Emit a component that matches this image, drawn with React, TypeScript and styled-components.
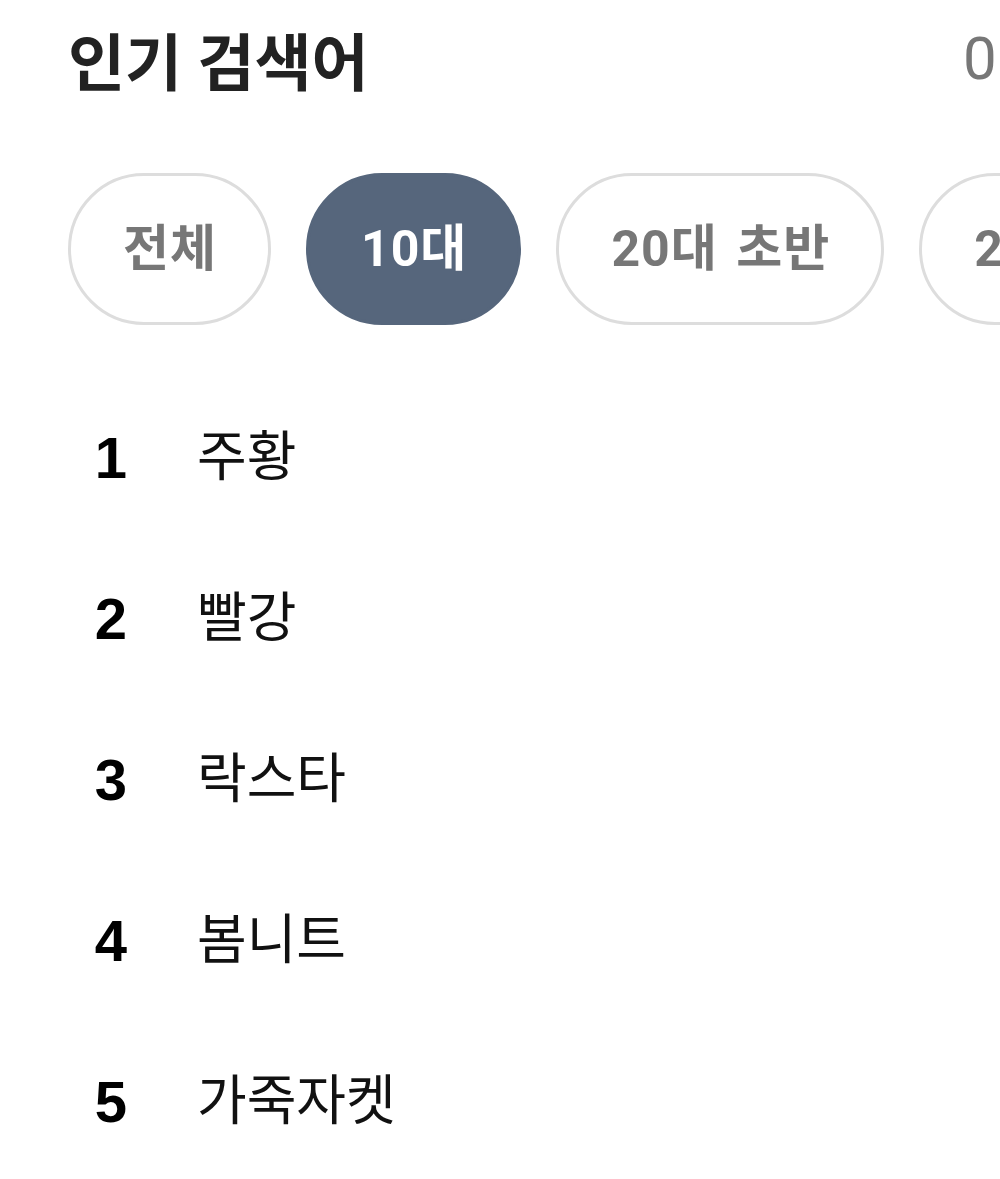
import styled, { createGlobalStyle } from "styled-components";
import { useState } from "react";

const GlobalStyle = createGlobalStyle`
  html, body {
    margin: 0;
    padding: 0;
    background: #ffffff;
    overflow: hidden;
  }

  body {
    font-family: Roboto, "Noto Sans CJK KR", sans-serif;
  }
`;

const ages = ["전체", "10대", "20대 초반", "20대 중반", "20대 후반", "30대"];

const keywords = ["주황", "빨강", "락스타", "봄니트", "가죽자켓"];

export default function App() {
  const [activeAge, setActiveAge] = useState("10대");

  return (
    <>
      <GlobalStyle />
      <Page>
        <Header>
          <Title>인기 검색어</Title>
          <UpdatedAt>01.23 11:00 기준</UpdatedAt>
        </Header>

        <FilterRow>
          {ages.map((age) => (
            <FilterChip
              key={age}
              $active={age === activeAge}
              onClick={() => setActiveAge(age)}
            >
              {age}
            </FilterChip>
          ))}
        </FilterRow>

        <RankList>
          {keywords.map((word, i) => (
            <RankRow key={word}>
              <RankNumber>{i + 1}</RankNumber>
              <Keyword>{word}</Keyword>
            </RankRow>
          ))}
        </RankList>
      </Page>
    </>
  );
}

const Page = styled.main`
  width: 1000px;
  min-height: 1179px;
  padding-left: 68px;
  box-sizing: border-box;
  overflow: hidden;
`;

// Header

const Header = styled.header`
  height: 124px;
  padding-top: 6px;
  box-sizing: border-box;
  display: grid;
  grid-template-columns: 895px auto;
  align-items: center;
`;

const Title = styled.h1`
  margin: 0;
  font-size: 62px;
  font-weight: 700;
  line-height: 1;
  color: #222222;
  white-space: nowrap;
`;

const UpdatedAt = styled.span`
  font-size: 60px;
  font-weight: 400;
  line-height: 1;
  color: #777777;
  white-space: nowrap;
  margin-top: -12px;
`;

// Age filter chips

const FilterRow = styled.nav`
  margin-top: 49px;
  display: flex;
  gap: 35px;
  overflow: hidden;
`;

const FilterChip = styled.button<{ $active: boolean }>`
  flex-shrink: 0;
  height: 152px;
  padding: 0 51px 0 52px;
  box-sizing: border-box;
  border-radius: 76px;
  border: 3px solid ${(p) => (p.$active ? "#56667c" : "#dddddd")};
  background: ${(p) => (p.$active ? "#56667c" : "#ffffff")};
  color: ${(p) => (p.$active ? "#ffffff" : "#777777")};
  font-family: Roboto, "Noto Sans CJK KR", sans-serif;
  font-size: 50px;
  font-weight: 700;
  line-height: 1;
  letter-spacing: 1px;
  word-spacing: 5px;
  white-space: nowrap;
  cursor: pointer;
`;

// Ranking list

const RankList = styled.ol`
  margin: 52px 0 0;
  padding: 0;
  list-style: none;
`;

const RankRow = styled.li`
  height: 161px;
  display: grid;
  grid-template-columns: 86px 1fr;
  column-gap: 43px;
  align-items: center;
`;

const RankNumber = styled.span`
  text-align: center;
  font-family: "Liberation Sans", Arial, sans-serif;
  font-size: 58px;
  font-weight: 700;
  line-height: 1;
  color: #000000;
`;

const Keyword = styled.span`
  font-size: 54px;
  font-weight: 400;
  line-height: 1;
  color: #111111;
`;
